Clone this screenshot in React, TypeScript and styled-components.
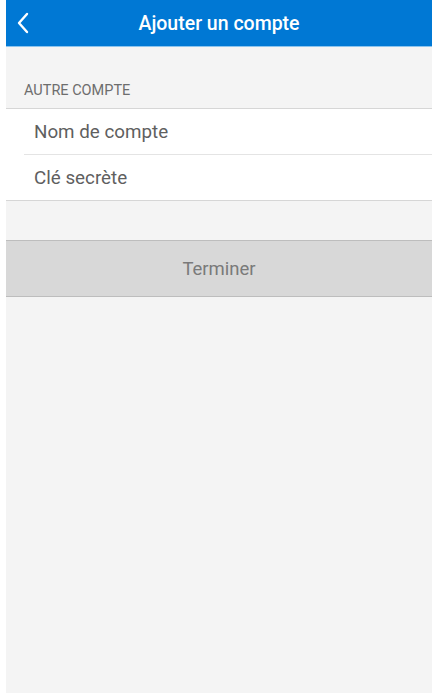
import * as React from 'react';
import styled, { createGlobalStyle } from 'styled-components';

const GlobalStyle = createGlobalStyle`
  html, body {
    margin: 0;
    padding: 0;
    background: #ffffff;
  }
  body {
    font-family: Roboto, 'Liberation Sans', Arial, sans-serif;
  }
`;

const Screen = styled.div`
  margin-left: 6px;
  height: 693px;
  background: #f4f4f4;
  display: flex;
  flex-direction: column;
`;

const NavBar = styled.div`
  height: 46px;
  background: #0078d4;
  border-bottom: 1px solid #8cc4ee;
  display: flex;
  align-items: center;
`;

const BackButton = styled.div`
  width: 34px;
  height: 46px;
  display: flex;
  align-items: center;
  justify-content: center;
  cursor: pointer;
`;

const NavTitle = styled.div`
  flex: 1;
  text-align: center;
  color: #ffffff;
  font-size: 19.5px;
  font-weight: 500;
  margin-right: 34px;
`;

const SectionHeader = styled.div`
  padding: 36px 0 9px 18px;
  font-size: 14.5px;
  line-height: 16px;
  color: #6d6d6d;
  text-transform: uppercase;
`;

const Group = styled.div`
  background: #ffffff;
  border-top: 1px solid #d6d6d6;
  border-bottom: 1px solid #d6d6d6;
`;

const Row = styled.div<{ last?: boolean }>`
  height: 45px;
  margin-left: 18px;
  padding-left: 10px;
  display: flex;
  align-items: center;
  font-size: 18.8px;
  color: #5f5f5f;
  border-bottom: ${(p) => (p.last ? 'none' : '1px solid #e4e4e4')};
`;

const DoneButton = styled.div`
  margin-top: 39px;
  height: 55px;
  background: #d8d8d8;
  border-top: 1px solid #bdbdbd;
  border-bottom: 1px solid #bdbdbd;
  display: flex;
  align-items: center;
  justify-content: center;
  font-size: 18.5px;
  color: #7a7a7a;
`;

const Chevron = () => (
  <svg width="14" height="22" viewBox="0 0 14 22" fill="none">
    <path
      d="M11 2 L3 11 L11 20"
      stroke="#ffffff"
      strokeWidth="2.4"
      strokeLinecap="round"
      strokeLinejoin="round"
    />
  </svg>
);

export default function App() {
  return (
    <>
      <GlobalStyle />
      <Screen>
        <NavBar>
          <BackButton>
            <Chevron />
          </BackButton>
          <NavTitle>Ajouter un compte</NavTitle>
        </NavBar>
        <SectionHeader>Autre compte</SectionHeader>
        <Group>
          <Row>Nom de compte</Row>
          <Row last>Clé secrète</Row>
        </Group>
        <DoneButton>Terminer</DoneButton>
      </Screen>
    </>
  );
}
